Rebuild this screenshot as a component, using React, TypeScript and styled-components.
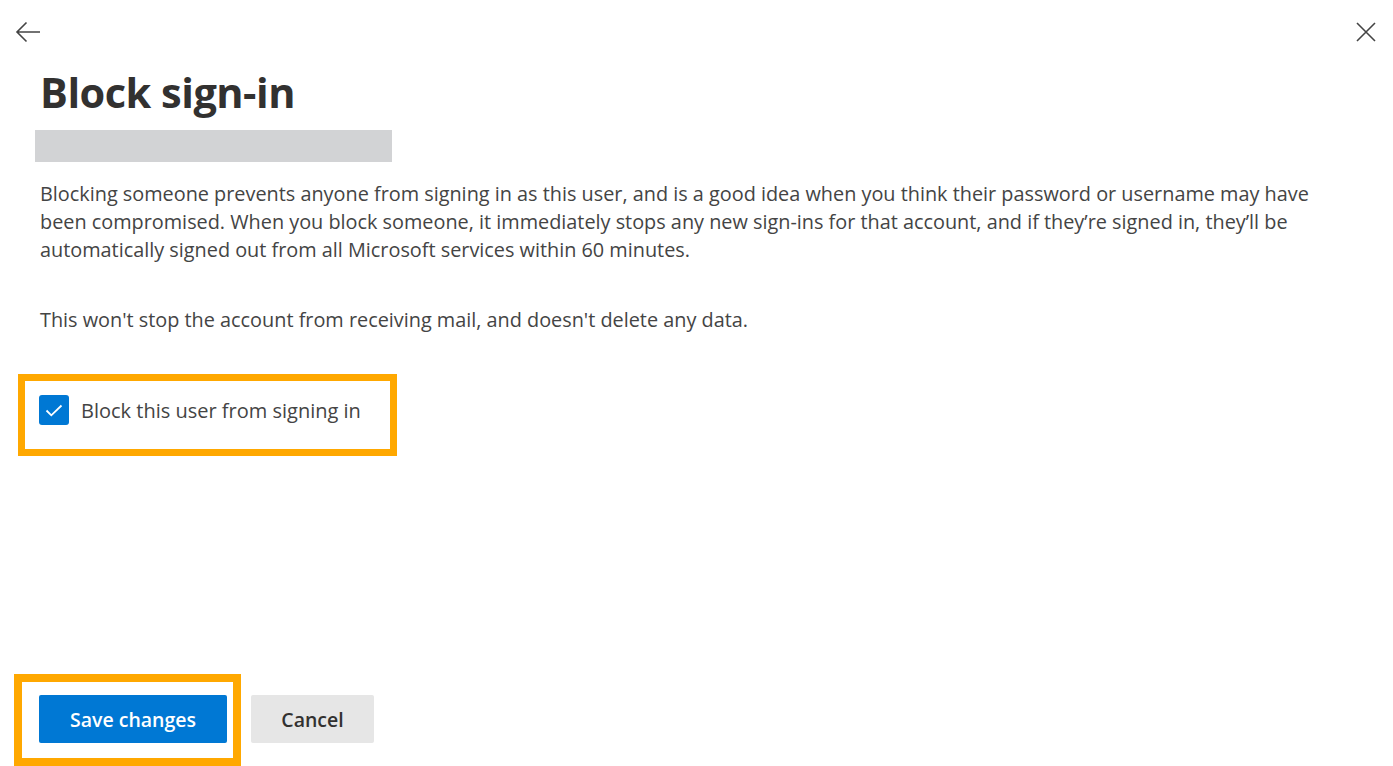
import React, { useState } from 'react';
import styled, { createGlobalStyle } from 'styled-components';

const GlobalStyle = createGlobalStyle`
  html, body {
    margin: 0;
    padding: 0;
    background: #ffffff;
  }
  body {
    font-family: "Open Sans", "Noto Sans", sans-serif;
    color: #323130;
  }
`;

const Panel = styled.div`
  height: 100vh;
  display: flex;
  flex-direction: column;
  box-sizing: border-box;
  overflow: hidden;
`;

const TopBar = styled.div`
  display: flex;
  justify-content: space-between;
  align-items: center;
  height: 64px;
  padding: 0 13px 0 14px;
`;

const IconButton = styled.button`
  width: 28px;
  height: 28px;
  padding: 0;
  border: none;
  background: transparent;
  display: flex;
  align-items: center;
  justify-content: center;
  cursor: pointer;
  color: #3b3a39;
`;

const Content = styled.div`
  flex: 1;
  padding: 0 60px 0 40px;
  display: flex;
  flex-direction: column;
`;

const Title = styled.h1`
  margin: 0;
  font-size: 41.5px;
  line-height: 56px;
  font-weight: 700;
  letter-spacing: -0.5px;
  color: #323130;
`;

const Redacted = styled.div`
  width: 357px;
  height: 32px;
  margin: 10px 0 0 -5px;
  background: #d2d3d5;
`;

const Paragraph = styled.p<{ $top: number }>`
  margin: ${p => p.$top}px 0 0 0;
  font-size: 19.85px;
  line-height: 28px;
  color: #444444;
  max-width: 1290px;
`;

const Highlight = styled.div<{ $w: number }>`
  border: ${p => p.$w}px solid #ffa800;
  box-sizing: border-box;
`;

const CheckHighlight = styled(Highlight)`
  width: 379px;
  height: 82px;
  margin: 40px 0 0 -22px;
  display: flex;
  align-items: flex-start;
  padding: 14px 0 0 14px;
`;

const CheckRow = styled.label`
  display: flex;
  align-items: center;
  gap: 12px;
  cursor: pointer;
  font-size: 20px;
  color: #444444;
`;

const Box = styled.span<{ $checked: boolean }>`
  width: 30px;
  height: 30px;
  border-radius: 3px;
  box-sizing: border-box;
  display: flex;
  align-items: center;
  justify-content: center;
  background: ${p => (p.$checked ? '#0078d4' : '#ffffff')};
  border: ${p => (p.$checked ? 'none' : '1px solid #605e5c')};
`;

const Footer = styled.div`
  display: flex;
  align-items: flex-start;
  padding: 0 0 0 14px;
  height: 92px;
  gap: 10px;
`;

const SaveHighlight = styled(Highlight)`
  width: 227px;
  height: 92px;
  padding: 13px 0 0 17px;
`;

const Button = styled.button<{ $primary?: boolean }>`
  height: 48px;
  border: none;
  border-radius: 2px;
  font-family: "Open Sans", "Noto Sans", sans-serif;
  font-size: 19.5px;
  font-weight: 600;
  cursor: pointer;
  padding: 0;
  background: ${p => (p.$primary ? '#0078d4' : '#e6e6e6')};
  color: ${p => (p.$primary ? '#ffffff' : '#323130')};
`;

const SaveButton = styled(Button)`
  width: 188px;
`;

const CancelButton = styled(Button)`
  width: 123px;
  margin-top: 21px;
`;

export default function App() {
  const [checked, setChecked] = useState(true);

  return (
    <Panel>
      <GlobalStyle />
      <TopBar>
        <IconButton aria-label="Back">
          <svg width="26" height="22" viewBox="0 0 26 22" fill="none">
            <path d="M25 11H2M11.5 1.5L2 11l9.5 9.5" stroke="#444" strokeWidth="1.6" />
          </svg>
        </IconButton>
        <IconButton aria-label="Close">
          <svg width="20" height="20" viewBox="0 0 20 20" fill="none">
            <path d="M1 1l18 18M19 1L1 19" stroke="#444" strokeWidth="1.6" />
          </svg>
        </IconButton>
      </TopBar>
      <Content>
        <Title>Block sign-in</Title>
        <Redacted />
        <Paragraph $top={18}>
          Blocking someone prevents anyone from signing in as this user, and is a good idea when you think
          their password or username may have been compromised. When you block someone, it immediately stops
          any new sign-ins for that account, and if they’re signed in, they’ll be automatically signed out
          from all Microsoft services within 60 minutes.
        </Paragraph>
        <Paragraph $top={42}>
          This won't stop the account from receiving mail, and doesn't delete any data.
        </Paragraph>
        <CheckHighlight $w={7}>
          <CheckRow onClick={() => setChecked(c => !c)}>
            <Box $checked={checked}>
              {checked && (
                <svg width="18" height="13" viewBox="0 0 18 13" fill="none">
                  <path d="M1.5 6.5l4.8 4.8L16.5 1.5" stroke="#fff" strokeWidth="1.8" />
                </svg>
              )}
            </Box>
            Block this user from signing in
          </CheckRow>
        </CheckHighlight>
      </Content>
      <Footer>
        <SaveHighlight $w={8}>
          <SaveButton $primary>Save changes</SaveButton>
        </SaveHighlight>
        <CancelButton>Cancel</CancelButton>
      </Footer>
    </Panel>
  );
}
